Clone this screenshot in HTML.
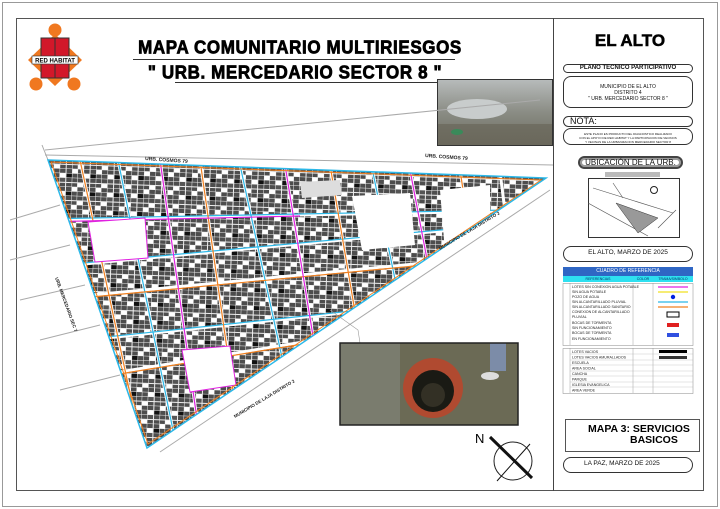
<!DOCTYPE html>
<html><head><meta charset="utf-8"><style>
*{margin:0;padding:0;box-sizing:border-box}
body{width:720px;height:509px;background:#fff;position:relative;overflow:hidden;font-family:"Liberation Sans",sans-serif}
.a{position:absolute}
.pill{position:absolute;border:2px solid #333;border-radius:8px;background:#fff;text-align:center;font-weight:bold;color:#111}
.ttl{font:bold 17px 'Liberation Sans',sans-serif;letter-spacing:.6px;-webkit-text-stroke:.7px #000;transform:scaleY(1.1);text-align:center}
</style></head><body>
<div class="a" style="left:2px;top:2px;width:716px;height:505px;border:1px solid #999"></div>
<div class="a" style="left:16px;top:18px;width:688px;height:473px;border:1px solid #555"></div>
<div class="a" style="left:553px;top:18px;width:1px;height:473px;background:#444"></div>

<svg class="a" style="left:20px;top:20px" width="80" height="80" viewBox="20 20 80 80">
<circle cx="55" cy="30" r="6.5" fill="#f07820"/><circle cx="36" cy="84" r="6.5" fill="#f07820"/><circle cx="74" cy="84" r="6.5" fill="#f07820"/>
<polygon points="55,34 82,60 55,86 28,60" fill="#f07820"/>
<rect x="41" y="38" width="28" height="40" fill="#d2182a" stroke="#333"/>
<line x1="55" y1="38" x2="55" y2="78" stroke="#333"/>
<rect x="32" y="56" width="46" height="8" fill="#fff" stroke="#333" stroke-width=".6"/>
<text x="55" y="62.3" font-size="6" font-weight="bold" text-anchor="middle" font-family="Liberation Sans">RED HABITAT</text>
</svg>

<div class="a ttl" style="left:120px;top:38px;width:360px">MAPA COMUNITARIO MULTIRIESGOS</div>
<div class="a" style="left:133px;top:59px;width:322px;height:1px;background:#333"></div>
<div class="a ttl" style="left:130px;top:63px;width:330px">" URB. MERCEDARIO SECTOR 8 "</div>
<div class="a" style="left:175px;top:82px;width:270px;height:1px;background:#333"></div>

<svg class="a" style="left:437px;top:79px" width="116" height="67"><defs><linearGradient id="g1" x1="0" y1="0" x2="0" y2="1"><stop offset="0" stop-color="#b8bcbc"/><stop offset=".5" stop-color="#8a8c84"/><stop offset="1" stop-color="#6b6a5e"/></linearGradient></defs>
<rect width="116" height="67" fill="url(#g1)"/><ellipse cx="40" cy="30" rx="30" ry="10" fill="#c8cccc"/><rect x="0" y="45" width="116" height="22" fill="#6a665a" opacity=".7"/><ellipse cx="20" cy="53" rx="6" ry="3" fill="#3a8a5a"/><rect width="116" height="67" fill="none" stroke="#333" stroke-width="2"/></svg>

<svg class="a" style="left:0;top:0" width="553" height="509">
<defs>
<pattern id="lots" width="24" height="18" patternUnits="userSpaceOnUse" patternTransform="rotate(2)">
<rect width="24" height="18" fill="#eee"/>
<rect x=".5" y=".5" width="5.5" height="3.5" fill="#4d4d4d"/><rect x="6.5" y=".5" width="5" height="3.5" fill="#4d4d4d"/><rect x="12" y=".5" width="5.5" height="3.5" fill="#fff"/><rect x="18" y=".5" width="5.5" height="3.5" fill="#4d4d4d"/>
<rect x=".5" y="4.5" width="5.5" height="4" fill="#4d4d4d"/><rect x="6.5" y="4.5" width="5" height="4" fill="#fff"/><rect x="12" y="4.5" width="5.5" height="4" fill="#4d4d4d"/><rect x="18" y="4.5" width="5.5" height="4" fill="#4d4d4d"/>
<rect x=".5" y="9" width="5.5" height="4" fill="#111"/><rect x="6.5" y="9" width="5" height="4" fill="#4d4d4d"/><rect x="12" y="9" width="5.5" height="4" fill="#4d4d4d"/><rect x="18" y="9" width="5.5" height="4" fill="#fff"/>
<rect x=".5" y="13.5" width="5.5" height="4" fill="#4d4d4d"/><rect x="6.5" y="13.5" width="5" height="4" fill="#4d4d4d"/><rect x="12" y="13.5" width="5.5" height="4" fill="#4d4d4d"/><rect x="18" y="13.5" width="5.5" height="4" fill="#555"/>
</pattern>
<clipPath id="tri"><polygon points="48,160 546,178 147,448"/></clipPath>
</defs>
<g stroke="#aaa" stroke-width="1" fill="none">
<line x1="45" y1="150" x2="540" y2="100"/><line x1="45" y1="155" x2="553" y2="165"/><line x1="42" y1="145" x2="48" y2="160"/>
<line x1="160" y1="452" x2="550" y2="190"/>
<line x1="10" y1="220" x2="60" y2="205"/><line x1="10" y1="260" x2="70" y2="245"/><line x1="20" y1="300" x2="85" y2="285"/><line x1="40" y1="340" x2="100" y2="325"/><line x1="60" y1="390" x2="120" y2="375"/>
</g>
<polygon points="48,160 546,178 147,448" fill="url(#lots)"/>
<g clip-path="url(#tri)" fill="none">
<g stroke="#fff" stroke-width="3">
<line x1="40" y1="220" x2="560" y2="210"/><line x1="40" y1="268" x2="560" y2="220"/><line x1="40" y1="300" x2="560" y2="250"/><line x1="40" y1="345" x2="560" y2="290"/><line x1="40" y1="385" x2="560" y2="300"/>
<line x1="80" y1="160" x2="140" y2="440"/><line x1="118" y1="160" x2="175" y2="440"/><line x1="160" y1="160" x2="200" y2="440"/><line x1="200" y1="160" x2="240" y2="440"/><line x1="240" y1="165" x2="300" y2="440"/><line x1="285" y1="165" x2="330" y2="440"/><line x1="330" y1="165" x2="370" y2="400"/><line x1="372" y1="168" x2="420" y2="400"/><line x1="410" y1="170" x2="450" y2="380"/><line x1="460" y1="170" x2="480" y2="300"/><line x1="500" y1="172" x2="510" y2="250"/>
</g>
<g stroke="#2bb8e8" stroke-width="1.2">
<line x1="40" y1="219" x2="560" y2="209"/><line x1="40" y1="267" x2="560" y2="219"/><line x1="40" y1="344" x2="560" y2="289"/>
<line x1="118" y1="160" x2="175" y2="440"/><line x1="240" y1="165" x2="300" y2="440"/><line x1="372" y1="168" x2="420" y2="400"/>
</g>
<g stroke="#f08020" stroke-width="1.2">
<line x1="40" y1="302" x2="560" y2="252"/><line x1="40" y1="387" x2="560" y2="302"/>
<line x1="80" y1="160" x2="140" y2="440"/><line x1="200" y1="160" x2="240" y2="440"/><line x1="330" y1="165" x2="370" y2="400"/><line x1="460" y1="170" x2="480" y2="300"/>
</g>
<g stroke="#e020e0" stroke-width="1.2">
<line x1="160" y1="160" x2="200" y2="440"/><line x1="285" y1="165" x2="330" y2="440"/><line x1="410" y1="170" x2="450" y2="380"/><line x1="40" y1="222" x2="300" y2="216"/>
</g>
<polygon points="88,222 145,218 148,258 95,262" fill="#fff" stroke="#e020e0" stroke-width="1"/>
<polygon points="352,196 410,193 415,245 362,250" fill="#fff"/>
<polygon points="182,350 230,346 236,385 190,392" fill="#fff" stroke="#e020e0" stroke-width="1"/>
<polygon points="440,190 490,185 490,240 445,252" fill="#fff"/>
<polygon points="300,182 340,180 342,195 302,198" fill="#ddd"/>
</g>
<polygon points="48,160 546,178 147,448" fill="none" stroke="#2bb8e8" stroke-width="1.5"/>
<polygon points="51,162 541,180 148,444" fill="none" stroke="#f08020" stroke-width="1"/>
<g font-family="Liberation Sans" font-weight="bold" fill="#222">
<text x="145" y="160" font-size="5" transform="rotate(4 145 160)">URB. COSMOS 79</text>
<text x="425" y="157" font-size="5" transform="rotate(4 425 157)">URB. COSMOS 79</text>
<text x="440" y="250" font-size="4.5" transform="rotate(-31 440 250)">MUNICIPIO DE LAJA DISTRITO 2</text>
<text x="235" y="418" font-size="4.5" transform="rotate(-31 235 418)">MUNICIPIO DE LAJA DISTRITO 2</text>
<text x="55" y="278" font-size="4.5" transform="rotate(70 55 278)">URB. MERCEDARIO SEC 7</text>
</g>
<polyline points="330,310 358,330 360,343" fill="none" stroke="#999" stroke-width=".6"/>
<g transform="translate(340,343)">
<rect width="178" height="82" fill="#6b6a55"/><rect x="0" y="0" width="60" height="82" fill="#7a7c6e"/>
<circle cx="93" cy="45" r="30" fill="#b04a30"/><circle cx="93" cy="48" r="21" fill="#1a1a14"/><circle cx="93" cy="52" r="12" fill="#333025"/>
<rect x="150" y="0" width="16" height="28" fill="#7c8ca8"/><ellipse cx="150" cy="33" rx="9" ry="4" fill="#ddd"/>
<rect width="178" height="82" fill="none" stroke="#222" stroke-width="1.5"/>
</g>
<text x="475" y="443" font-size="13" font-family="Liberation Sans">N</text>
<circle cx="513" cy="461" r="19" fill="none" stroke="#222" stroke-width="1"/>
<line x1="490" y1="437" x2="532" y2="478" stroke="#111" stroke-width="3"/>
<line x1="530" y1="444" x2="497" y2="481" stroke="#111" stroke-width="1"/>
</svg>

<div class="a" style="left:555px;top:31px;width:150px;text-align:center;font:900 17px 'Liberation Sans',sans-serif;-webkit-text-stroke:.5px #000">EL ALTO</div>
<div class="pill" style="left:563px;top:64px;width:130px;height:9px;font-size:6px;line-height:6px;border-width:1.5px">PLANO TECNICO PARTICIPATIVO</div>
<div class="pill" style="left:563px;top:76px;width:130px;height:32px;font-size:5px;line-height:6px;padding-top:7px;font-weight:normal;border-width:1.5px">MUNICIPIO DE EL ALTO<br>DISTRITO 4<br>" URB. MERCEDARIO SECTOR 8 "</div>
<div class="pill" style="left:563px;top:116px;width:130px;height:11px;font-size:9px;line-height:9px;text-align:left;padding-left:6px;font-weight:normal;border-width:1.5px">NOTA:</div>
<div class="pill" style="left:563px;top:128px;width:130px;height:17px;font-size:3px;line-height:4px;padding-top:3px;font-weight:normal;border-width:1.5px">ESTE PLANO ES PRODUCTO DEL DIAGNOSTICO REALIZADO<br>CON EL APOYO DE RED HABITAT Y LA PARTICIPACION DE VECINOS<br>Y VECINAS DE LA URBANIZACION MERCEDARIO SECTOR 8</div>
<div class="pill" style="left:578px;top:156px;width:105px;height:13px;font-size:8px;line-height:9px;font-weight:normal;border-color:#444;background:#fff;box-shadow:inset 0 0 0 2px #999">UBICACIÓN DE LA URB.</div>
<div class="a" style="left:605px;top:172px;width:55px;height:5px;background:#bbb"></div>
<svg class="a" style="left:588px;top:178px" width="92" height="60"><rect x=".5" y=".5" width="91" height="59" fill="#fff" stroke="#333"/>
<g stroke="#555" stroke-width=".6" fill="none"><line x1="5" y1="10" x2="85" y2="35"/><line x1="0" y1="25" x2="60" y2="58"/><line x1="25" y1="5" x2="35" y2="20"/><line x1="70" y1="50" x2="88" y2="32"/></g>
<polygon points="28,25 70,40 50,55" fill="#999" stroke="#333" stroke-width=".5"/>
<circle cx="66" cy="12" r="3.5" fill="none" stroke="#222"/></svg>
<div class="pill" style="left:563px;top:246px;width:130px;height:16px;font-size:6.5px;line-height:12px;font-weight:normal;border-width:1.5px">EL ALTO, MARZO DE 2025</div>

<div class="a" style="left:563px;top:267px;width:130px;height:9px;background:#2f66c4;color:#fff;font-size:5px;line-height:9px;text-align:center">CUADRO DE REFERENCIA</div>
<div class="a" style="left:563px;top:276px;width:130px;height:6px;background:#2ee0f0;font-size:3.5px;line-height:6px;color:#036;display:flex"><span style="width:70px;text-align:center">REFERENCIAS</span><span style="width:20px;text-align:center">COLOR</span><span style="width:40px;text-align:center">TRAMA/SIMBOLO</span></div>
<svg class="a" style="left:561px;top:283px" width="133" height="112" font-family="Liberation Sans" font-size="3.6">
<rect x="2" y=".5" width="130" height="62" fill="#fff" stroke="#888" stroke-width=".5"/>
<line x1="9" y1="0" x2="9" y2="62" stroke="#888" stroke-width=".4"/><line x1="72" y1="0" x2="72" y2="62" stroke="#888" stroke-width=".4"/><line x1="92" y1="0" x2="92" y2="62" stroke="#888" stroke-width=".4"/>
<g fill="#222"><text x="11" y="5">LOTES SIN CONEXION AGUA POTABLE</text><text x="11" y="10">SIN AGUA POTABLE</text><text x="11" y="15">POZO DE AGUA</text><text x="11" y="20">SIN ALCANTARILLADO PLUVIAL</text><text x="11" y="25">SIN ALCANTARILLADO SANITARIO</text><text x="11" y="30">CONEXION DE ALCANTARILLADO</text><text x="11" y="35">PLUVIAL</text><text x="11" y="41">BOCAS DE TORMENTA</text><text x="11" y="46">SIN FUNCIONAMIENTO</text><text x="11" y="51">BOCAS DE TORMENTA</text><text x="11" y="57">EN FUNCIONAMIENTO</text></g>
<line x1="97" y1="4" x2="127" y2="4" stroke="#e020e0" stroke-width="1.2"/><line x1="97" y1="9" x2="127" y2="9" stroke="#f0e020" stroke-width="1.2"/><circle cx="112" cy="14" r="2.2" fill="#0020e0"/><line x1="97" y1="19" x2="127" y2="19" stroke="#2bb8e8" stroke-width="1.2"/><line x1="97" y1="24" x2="127" y2="24" stroke="#f08020" stroke-width="1.2"/>
<rect x="106" y="29" width="12" height="5" fill="none" stroke="#000" stroke-width="1"/><rect x="106" y="40" width="12" height="4" fill="#e02020"/><rect x="106" y="50" width="12" height="4" fill="#3050e0"/>
<rect x="2" y="65.5" width="130" height="45" fill="#fff" stroke="#888" stroke-width=".5"/>
<line x1="9" y1="65" x2="9" y2="110" stroke="#888" stroke-width=".4"/><line x1="72" y1="65" x2="72" y2="110" stroke="#888" stroke-width=".4"/><line x1="92" y1="65" x2="92" y2="110" stroke="#888" stroke-width=".4"/>
<g fill="#222"><text x="11" y="70">LOTES VACIOS</text><text x="11" y="75.5">LOTES VACIOS AMURALLADOS</text><text x="11" y="81">ESCUELA</text><text x="11" y="86.5">AREA SOCIAL</text><text x="11" y="92">CANCHA</text><text x="11" y="97.5">PARQUE</text><text x="11" y="103">IGLESIA EVANGELICA</text><text x="11" y="108.5">AREA VERDE</text></g>
<rect x="98" y="67" width="28" height="3" fill="#000"/><rect x="98" y="73" width="28" height="3" fill="#333"/>
<g stroke="#aaa" stroke-width=".3"><line x1="9" y1="71" x2="132" y2="71"/><line x1="9" y1="77" x2="132" y2="77"/><line x1="9" y1="82" x2="132" y2="82"/><line x1="9" y1="88" x2="132" y2="88"/><line x1="9" y1="93" x2="132" y2="93"/><line x1="9" y1="99" x2="132" y2="99"/><line x1="9" y1="104" x2="132" y2="104"/></g>
</svg>

<div class="a" style="left:565px;top:419px;width:135px;height:33px;border:1px solid #555;font-weight:bold;font-size:10.5px;line-height:11px;padding:4px 0 0 22px">MAPA 3: SERVICIOS<br><span style="padding-left:42px">BASICOS</span></div>
<div class="pill" style="left:563px;top:457px;width:130px;height:16px;font-size:6.5px;line-height:12px;font-weight:normal;text-align:left;padding-left:20px;border-width:1.5px">LA PAZ, MARZO DE 2025</div>
</body></html>
